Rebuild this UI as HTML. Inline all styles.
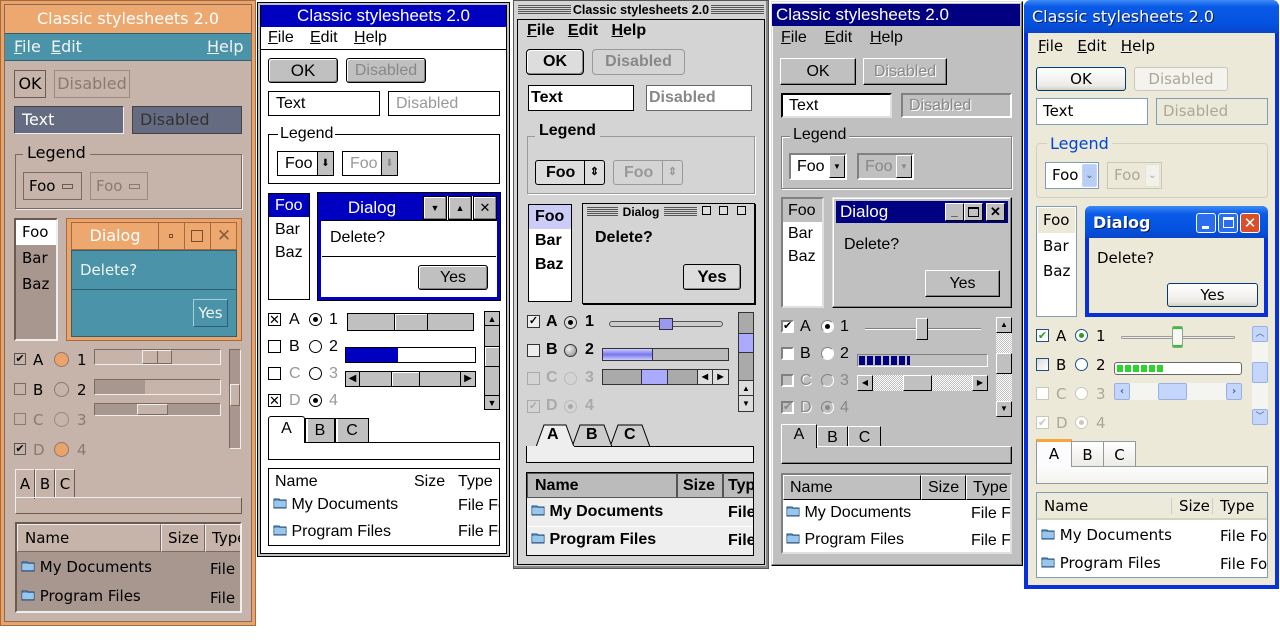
<!DOCTYPE html>
<html><head><meta charset="utf-8"><style>
*{margin:0;padding:0;box-sizing:border-box}
body{width:1280px;height:640px;background:#fff;position:relative;overflow:hidden;font-family:"DejaVu Sans","Liberation Sans",sans-serif;font-size:15px;color:#000}
.a{position:absolute;white-space:nowrap}
.c{text-align:center}
u{text-decoration:underline}
</style></head><body>
<svg width="0" height="0" style="position:absolute"><defs>
<symbol id="fold" viewBox="0 0 14 14"><path d="M1 3h5l1 1h6v8H1z" fill="#5aa0d8" stroke="#2a4a70"/><path d="M1 6h12M1 8h12M1 10h12" stroke="#d8ecff"/></symbol>
</defs></svg>

<!-- ================= PANEL 1 ================= -->
<div class="a" style="left:0;top:0;width:256px;height:626px;background:#e9a46c;border:1px solid #a86a3c"></div>
<div class="a" style="left:4px;top:4px;width:248px;height:618px;background:#c6b3a9;border:1px solid #8a6a58"></div>
<div class="a c" style="left:5px;top:5px;width:246px;height:28px;background:#eda870;color:#fff;font-size:16px;line-height:28px">Classic stylesheets 2.0</div>
<div class="a" style="left:5px;top:33px;width:246px;height:28px;background:#4a93a8;border-top:1px solid #2e6070;border-bottom:1px solid #2e6070;color:#f4f4f4;font-size:16px;line-height:26px"><span style="position:absolute;left:9px"><u>F</u>ile&nbsp; <u>E</u>dit</span><span style="position:absolute;left:202px"><u>H</u>elp</span></div>
<div class="a c" style="left:14px;top:70px;width:32px;height:28px;border:1px solid #6b5a50;line-height:26px;font-size:16px">OK</div>
<div class="a c" style="left:54px;top:70px;width:76px;height:28px;border:1px solid #9a8a80;line-height:26px;color:#8a7a72;font-size:16px">Disabled</div>
<div class="a" style="left:14px;top:106px;width:110px;height:28px;background:#656b80;border:1px solid #444;border-right-color:#eee;border-bottom-color:#eee;color:#fff;line-height:26px;padding-left:7px;font-size:16px">Text</div>
<div class="a" style="left:132px;top:106px;width:110px;height:28px;background:#656b80;border:1px solid #444;color:#333;line-height:26px;padding-left:7px;font-size:16px">Disabled</div>
<div class="a" style="left:15px;top:154px;width:227px;height:55px;border:1px solid #7a6a60;box-shadow:1px 1px 0 #eee"></div>
<div class="a" style="left:23px;top:143px;background:#c6b3a9;padding:0 4px;font-size:16px;line-height:20px">Legend</div>
<div class="a" style="left:23px;top:172px;width:59px;height:28px;border:1px solid #7a6a60;line-height:26px;padding-left:5px">Foo <span style="display:inline-block;width:11px;height:5px;border:1px solid #6b5a50;vertical-align:middle;margin-left:2px"></span></div>
<div class="a" style="left:90px;top:172px;width:58px;height:28px;border:1px solid #9a8a80;line-height:26px;padding-left:5px;color:#8a7a72">Foo <span style="display:inline-block;width:11px;height:5px;border:1px solid #8a7a72;vertical-align:middle;margin-left:2px"></span></div>
<div class="a" style="left:14px;top:218px;width:44px;height:123px;background:#a8978f;border:2px solid #6b5a50;border-right-color:#eee;border-bottom-color:#eee"></div>
<div class="a" style="left:16px;top:220px;width:40px;height:25px;background:#fff;line-height:25px;padding-left:6px;font-size:15px">Foo</div>
<div class="a" style="left:22px;top:248px;font-size:15px;line-height:20px">Bar<br><span style="line-height:32px">Baz</span></div>
<div class="a" style="left:66px;top:218px;width:176px;height:123px;background:#e9a46c;border:1px solid #a86a3c"></div>
<div class="a" style="left:71px;top:222px;width:166px;height:28px;background:#eda870;border:1px solid #a86a3c"></div>
<div class="a c" style="left:72px;top:223px;width:86px;height:26px;color:#fff;line-height:26px;font-size:16px">Dialog</div>
<div class="a" style="left:158px;top:223px;width:1px;height:26px;background:#a86a3c"></div>
<div class="a" style="left:184px;top:223px;width:1px;height:26px;background:#a86a3c"></div>
<div class="a" style="left:210px;top:223px;width:1px;height:26px;background:#a86a3c"></div>
<div class="a" style="left:169px;top:234px;width:4px;height:4px;border:1px solid #7a4a2a"></div>
<div class="a" style="left:191px;top:230px;width:12px;height:12px;border:1px solid #7a4a2a"></div>
<div class="a c" style="left:211px;top:223px;width:26px;height:26px;line-height:26px;color:#8a5a3a;font-size:17px">✕</div>
<div class="a" style="left:71px;top:250px;width:166px;height:87px;background:#4a93a8;border:1px solid #2e6070"></div>
<div class="a" style="left:80px;top:260px;color:#f4f4f4;font-size:15px;line-height:20px">Delete?</div>
<div class="a" style="left:72px;top:289px;width:164px;height:1px;background:#2e6070"></div>
<div class="a c" style="left:193px;top:299px;width:35px;height:28px;border:1px solid #2e6070;border-left-color:#a0d0dc;border-top-color:#a0d0dc;color:#f4f4f4;line-height:26px">Yes</div>
<div class="a" style="left:14px;top:353px;width:12px;height:12px;border:1px solid #555;font-size:11px;line-height:10px;text-align:center">✔</div>
<div class="a" style="left:14px;top:383px;width:12px;height:12px;border:1px solid #7a6a60"></div>
<div class="a" style="left:14px;top:413px;width:12px;height:12px;border:1px solid #8a7a72"></div>
<div class="a" style="left:14px;top:443px;width:12px;height:12px;border:1px solid #555;font-size:11px;line-height:10px;text-align:center">✔</div>
<div class="a" style="left:33px;top:350px;line-height:20px">A</div>
<div class="a" style="left:33px;top:380px;line-height:20px">B</div>
<div class="a" style="left:33px;top:410px;line-height:20px;color:#8a7a72">C</div>
<div class="a" style="left:33px;top:440px;line-height:20px;color:#8a7a72">D</div>
<div class="a" style="left:54px;top:352px;width:15px;height:15px;border-radius:50%;background:#eba36a;border:1px solid #8a7a72"></div>
<div class="a" style="left:54px;top:382px;width:15px;height:15px;border-radius:50%;border:1px solid #8a7a72"></div>
<div class="a" style="left:54px;top:412px;width:15px;height:15px;border-radius:50%;border:1px solid #9a8a80"></div>
<div class="a" style="left:54px;top:442px;width:15px;height:15px;border-radius:50%;background:#eba36a;border:1px solid #8a7a72"></div>
<div class="a" style="left:77px;top:350px;line-height:20px">1</div>
<div class="a" style="left:77px;top:380px;line-height:20px">2</div>
<div class="a" style="left:77px;top:410px;line-height:20px;color:#8a7a72">3</div>
<div class="a" style="left:77px;top:440px;line-height:20px;color:#8a7a72">4</div>
<div class="a" style="left:94px;top:349px;width:127px;height:16px;border:1px solid #7a6a60;border-right-color:#eee;border-bottom-color:#eee"></div>
<div class="a" style="left:142px;top:350px;width:30px;height:14px;border:1px solid #7a6a60;border-left-color:#eee;border-top-color:#eee;background:#c6b3a9"><div style="position:absolute;left:14px;top:0;width:1px;height:12px;background:#7a6a60"></div></div>
<div class="a" style="left:94px;top:379px;width:127px;height:16px;border:1px solid #7a6a60;border-right-color:#eee;border-bottom-color:#eee"></div>
<div class="a" style="left:95px;top:380px;width:50px;height:14px;background:#a8978f"></div>
<div class="a" style="left:94px;top:403px;width:127px;height:13px;background:#a8978f;border:1px solid #7a6a60;border-right-color:#eee;border-bottom-color:#eee"></div>
<div class="a" style="left:137px;top:404px;width:31px;height:11px;background:#c6b3a9;border:1px solid #eee;border-right-color:#7a6a60;border-bottom-color:#7a6a60"></div>
<div class="a" style="left:229px;top:349px;width:12px;height:100px;background:#a8978f;border:1px solid #7a6a60;border-right-color:#eee;border-bottom-color:#eee"></div>
<div class="a" style="left:230px;top:384px;width:10px;height:22px;background:#c6b3a9;border:1px solid #eee;border-right-color:#7a6a60;border-bottom-color:#7a6a60"></div>
<div class="a c" style="left:15px;top:469px;width:20px;height:30px;border:1px solid #eee;border-right-color:#6b5a50;border-bottom:none;line-height:28px">A</div>
<div class="a c" style="left:35px;top:469px;width:20px;height:28px;border:1px solid #eee;border-right-color:#6b5a50;border-bottom:none;line-height:28px">B</div>
<div class="a c" style="left:55px;top:469px;width:20px;height:28px;border:1px solid #eee;border-right-color:#6b5a50;border-bottom:none;line-height:28px">C</div>
<div class="a" style="left:15px;top:497px;width:227px;height:17px;border:1px solid #6b5a50;border-left-color:#eee;border-top:1px solid #eee"></div>
<div class="a" style="left:15px;top:522px;width:227px;height:91px;background:#a8978f;border:2px solid #6b5a50;border-right-color:#eee;border-bottom-color:#eee;overflow:hidden">
 <div class="a" style="left:0;top:0;width:144px;height:28px;background:#c6b3a9;border:1px solid #eee;border-right-color:#7a6a60;border-bottom-color:#7a6a60;line-height:26px;padding-left:7px">Name</div>
 <div class="a" style="left:144px;top:0;width:44px;height:28px;background:#c6b3a9;border:1px solid #eee;border-right-color:#7a6a60;border-bottom-color:#7a6a60;line-height:26px;padding-left:6px">Size</div>
 <div class="a" style="left:188px;top:0;width:50px;height:28px;background:#c6b3a9;border:1px solid #eee;border-bottom-color:#7a6a60;line-height:26px;padding-left:6px">Type</div>
 <div class="a" style="left:4px;top:33px;line-height:20px"><svg width="14" height="14" style="vertical-align:-1px"><use href="#fold"/></svg> My Documents</div>
 <div class="a" style="left:193px;top:35px;line-height:20px">File</div>
 <div class="a" style="left:4px;top:62px;line-height:20px"><svg width="14" height="14" style="vertical-align:-1px"><use href="#fold"/></svg> Program Files</div>
 <div class="a" style="left:193px;top:64px;line-height:20px">File</div>
</div>

<!-- ================= PANEL 2 ================= -->
<div style="font-family:'Liberation Sans',sans-serif;font-size:16px">
<div class="a" style="left:257px;top:2px;width:253px;height:555px;background:#c0c0c0;border:1px solid #000"></div>
<div class="a" style="left:260px;top:5px;width:247px;height:549px;background:#fff;border:1px solid #000"></div>
<div class="a c" style="left:261px;top:5px;width:245px;height:22px;background:#0000c0;color:#fff;line-height:22px;font-size:17px">Classic stylesheets 2.0</div>
<div class="a" style="left:261px;top:27px;width:245px;height:23px;border-bottom:1px solid #000;line-height:22px"><span class="a" style="left:7px"><u>F</u>ile</span><span class="a" style="left:49px"><u>E</u>dit</span><span class="a" style="left:93px"><u>H</u>elp</span></div>
<div class="a c" style="left:268px;top:58px;width:70px;height:25px;background:#c0c0c0;border:1px solid #000;border-radius:3px;box-shadow:inset -1px -1px 0 #808080,inset 1px 1px 0 #fff;line-height:23px;font-size:17px">OK</div>
<div class="a c" style="left:346px;top:58px;width:80px;height:25px;background:#c0c0c0;border:1px solid #000;border-radius:3px;box-shadow:inset -1px -1px 0 #808080,inset 1px 1px 0 #fff;line-height:23px;color:#888">Disabled</div>
<div class="a" style="left:268px;top:91px;width:112px;height:25px;border:1px solid #000;line-height:23px;padding-left:7px">Text</div>
<div class="a" style="left:388px;top:91px;width:112px;height:25px;border:1px solid #000;line-height:23px;padding-left:7px;color:#999">Disabled</div>
<div class="a" style="left:268px;top:134px;width:232px;height:50px;border:1px solid #000"></div>
<div class="a" style="left:278px;top:124px;background:#fff;padding:0 2px;line-height:20px">Legend</div>
<div class="a" style="left:277px;top:151px;width:57px;height:25px;border:1px solid #000;line-height:23px;padding-left:7px">Foo<div class="a c" style="right:0;top:0;width:16px;height:23px;background:#c0c0c0;border-left:1px solid #000;font-size:10px;line-height:23px">⬇</div></div>
<div class="a" style="left:342px;top:151px;width:56px;height:25px;border:1px solid #000;line-height:23px;padding-left:7px;color:#999">Foo<div class="a c" style="right:0;top:0;width:16px;height:23px;background:#c0c0c0;border-left:1px solid #000;font-size:10px;line-height:23px;color:#888">⬇</div></div>
<div class="a" style="left:268px;top:193px;width:42px;height:107px;border:1px solid #000"></div>
<div class="a" style="left:269px;top:194px;width:40px;height:23px;background:#0000c0;color:#fff;line-height:23px;padding-left:6px">Foo</div>
<div class="a" style="left:275px;top:218px;line-height:23px">Bar<br>Baz</div>
<div class="a" style="left:318px;top:193px;width:182px;height:107px;border:3px solid #0000c0;outline:1px solid #000"></div>
<div class="a c" style="left:321px;top:196px;width:102px;height:24px;background:#0000c0;color:#fff;line-height:24px;font-size:17px">Dialog</div>
<div class="a c" style="left:423px;top:196px;width:24px;height:24px;background:#c0c0c0;border:1px solid #000;box-shadow:inset -1px -1px 0 #808080,inset 1px 1px 0 #fff;font-size:9px;line-height:22px">▼</div>
<div class="a c" style="left:448px;top:196px;width:24px;height:24px;background:#c0c0c0;border:1px solid #000;box-shadow:inset -1px -1px 0 #808080,inset 1px 1px 0 #fff;font-size:9px;line-height:22px">▲</div>
<div class="a c" style="left:473px;top:196px;width:24px;height:24px;background:#c0c0c0;border:1px solid #000;box-shadow:inset -1px -1px 0 #808080,inset 1px 1px 0 #fff;font-size:13px;line-height:22px">✕</div>
<div class="a" style="left:321px;top:220px;width:176px;height:1px;background:#000"></div>
<div class="a" style="left:330px;top:228px;line-height:20px">Delete?</div>
<div class="a" style="left:322px;top:256px;width:174px;height:1px;background:#000"></div>
<div class="a c" style="left:418px;top:265px;width:70px;height:25px;background:#c0c0c0;border:1px solid #000;border-radius:3px;box-shadow:inset -1px -1px 0 #808080,inset 1px 1px 0 #fff;line-height:23px">Yes</div>
<div class="a c" style="left:268px;top:313px;width:13px;height:13px;border:1px solid #000;font-size:13px;line-height:11px">✕</div>
<div class="a" style="left:268px;top:340px;width:13px;height:13px;border:1px solid #000"></div>
<div class="a" style="left:268px;top:367px;width:13px;height:13px;border:1px solid #000"></div>
<div class="a c" style="left:268px;top:394px;width:13px;height:13px;border:1px solid #000;font-size:13px;line-height:11px">✕</div>
<div class="a" style="left:289px;top:310px;line-height:20px">A</div>
<div class="a" style="left:289px;top:337px;line-height:20px">B</div>
<div class="a" style="left:289px;top:364px;line-height:20px;color:#999">C</div>
<div class="a" style="left:289px;top:391px;line-height:20px;color:#999">D</div>
<div class="a" style="left:309px;top:313px;width:13px;height:13px;border:1px solid #000;border-radius:50%"><div style="position:absolute;left:3px;top:3px;width:5px;height:5px;border-radius:50%;background:#000"></div></div>
<div class="a" style="left:309px;top:340px;width:13px;height:13px;border:1px solid #000;border-radius:50%"></div>
<div class="a" style="left:309px;top:367px;width:13px;height:13px;border:1px solid #000;border-radius:50%"></div>
<div class="a" style="left:309px;top:394px;width:13px;height:13px;border:1px solid #000;border-radius:50%"><div style="position:absolute;left:3px;top:3px;width:5px;height:5px;border-radius:50%;background:#000"></div></div>
<div class="a" style="left:329px;top:310px;line-height:20px">1</div>
<div class="a" style="left:329px;top:337px;line-height:20px">2</div>
<div class="a" style="left:329px;top:364px;line-height:20px;color:#999">3</div>
<div class="a" style="left:329px;top:391px;line-height:20px;color:#999">4</div>
<div class="a" style="left:347px;top:313px;width:127px;height:18px;background:#c0c0c0;border:1px solid #000"></div>
<div class="a" style="left:394px;top:313px;width:34px;height:18px;background:#c0c0c0;border:1px solid #000;box-shadow:inset 1px 1px 0 #fff"></div>
<div class="a" style="left:345px;top:347px;width:131px;height:16px;border:1px solid #000"></div>
<div class="a" style="left:346px;top:348px;width:52px;height:14px;background:#0000c0"></div>
<div class="a" style="left:345px;top:371px;width:131px;height:16px;background:#c0c0c0;border:1px solid #000"></div>
<div class="a c" style="left:346px;top:372px;width:14px;height:14px;background:#c0c0c0;border-right:1px solid #000;font-size:10px;line-height:14px">◀</div>
<div class="a c" style="left:460px;top:372px;width:15px;height:14px;background:#c0c0c0;border-left:1px solid #000;font-size:10px;line-height:14px">▶</div>
<div class="a" style="left:391px;top:371px;width:29px;height:16px;background:#c0c0c0;border:1px solid #000;box-shadow:inset 1px 1px 0 #fff"></div>
<div class="a" style="left:484px;top:311px;width:16px;height:99px;background:#c0c0c0;border:1px solid #000"></div>
<div class="a c" style="left:485px;top:312px;width:14px;height:14px;border-bottom:1px solid #000;font-size:9px;line-height:14px">▲</div>
<div class="a c" style="left:485px;top:395px;width:14px;height:14px;border-top:1px solid #000;font-size:9px;line-height:14px">▼</div>
<div class="a" style="left:484px;top:346px;width:16px;height:21px;border:1px solid #000;box-shadow:inset 1px 1px 0 #fff"></div>
<div class="a c" style="left:268px;top:416px;width:37px;height:27px;background:#fff;border:1px solid #000;border-bottom:none;border-radius:3px 3px 0 0;line-height:24px">A</div>
<div class="a c" style="left:305px;top:418px;width:30px;height:25px;background:#c0c0c0;border:1px solid #000;box-shadow:inset 2px 0 0 #fff;line-height:24px">B</div>
<div class="a c" style="left:335px;top:418px;width:34px;height:25px;background:#c0c0c0;border:1px solid #000;box-shadow:inset 2px 0 0 #fff;line-height:24px">C</div>
<div class="a" style="left:268px;top:442px;width:232px;height:18px;border:1px solid #000;border-top:none"></div>
<div class="a" style="left:305px;top:442px;width:195px;height:1px;background:#000"></div>
<div class="a" style="left:268px;top:468px;width:232px;height:78px;border:1px solid #000;overflow:hidden">
 <div class="a" style="left:6px;top:3px;line-height:20px">Name</div>
 <div class="a" style="left:145px;top:3px;line-height:20px">Size</div>
 <div class="a" style="left:189px;top:3px;line-height:20px">Type</div>
 <div class="a" style="left:4px;top:26px;line-height:20px"><svg width="14" height="14" style="vertical-align:-1px"><use href="#fold"/></svg> My Documents</div>
 <div class="a" style="left:189px;top:27px;line-height:20px">File Fo</div>
 <div class="a" style="left:4px;top:53px;line-height:20px"><svg width="14" height="14" style="vertical-align:-1px"><use href="#fold"/></svg> Program Files</div>
 <div class="a" style="left:189px;top:53px;line-height:20px">File Fo</div>
</div>
</div>

<!-- ================= PANEL 3 ================= -->
<div style="font-family:'Liberation Sans',sans-serif;font-weight:bold;font-size:16px">
<div class="a" style="left:513px;top:0;width:256px;height:569px;background:#d4d4d4;border:1px solid #555;box-shadow:inset -2px -2px 0 #888"></div>
<div class="a" style="left:516px;top:2px;width:250px;height:16px;background:repeating-linear-gradient(#d4d4d4 0 1px,#555 1px 2px);background-clip:content-box;padding:3px 2px"></div>
<div class="a c" style="left:571px;top:2px;width:140px;height:16px;background:#d4d4d4;font-size:12.5px;line-height:16px">Classic stylesheets 2.0</div>
<div class="a" style="left:517px;top:19px;width:248px;height:546px;border:1px solid #000"></div>
<div class="a" style="left:527px;top:20px;line-height:22px"><u>F</u>ile&nbsp;&nbsp; <u>E</u>dit&nbsp;&nbsp; <u>H</u>elp</div>
<div class="a c" style="left:526px;top:49px;width:58px;height:26px;background:#ddd;border:1px solid #000;border-radius:4px;box-shadow:inset -1px -1px 0 #888,inset 1px 1px 0 #fff;line-height:24px">OK</div>
<div class="a c" style="left:592px;top:49px;width:93px;height:26px;border:1px solid #999;border-radius:4px;line-height:24px;color:#888">Disabled</div>
<div class="a" style="left:528px;top:85px;width:106px;height:26px;background:#fff;border:1px solid #000;line-height:24px;padding-left:2px">Text</div>
<div class="a" style="left:646px;top:85px;width:106px;height:26px;background:#fff;border:1px solid #666;line-height:24px;padding-left:2px;color:#888">Disabled</div>
<div class="a" style="left:527px;top:136px;width:228px;height:58px;border:1px solid #999;box-shadow:1px 1px 0 #fff"></div>
<div class="a" style="left:535px;top:121px;background:#d4d4d4;padding:0 4px;line-height:20px">Legend</div>
<div class="a" style="left:535px;top:160px;width:70px;height:25px;background:#ddd;border:1px solid #000;border-radius:3px;line-height:23px;padding-left:10px">Foo<div class="a c" style="right:0;top:0;width:20px;height:23px;border-left:1px solid #000;font-size:11px;line-height:23px">⇕</div></div>
<div class="a" style="left:613px;top:160px;width:70px;height:25px;border:1px solid #999;border-radius:3px;line-height:23px;padding-left:10px;color:#999">Foo<div class="a c" style="right:0;top:0;width:20px;height:23px;border-left:1px solid #999;font-size:11px;line-height:23px">⇕</div></div>
<div class="a" style="left:528px;top:204px;width:44px;height:98px;background:#fff;border:1px solid #000"></div>
<div class="a" style="left:529px;top:205px;width:42px;height:24px;background:#ccccf8;line-height:24px;padding-left:6px">Foo</div>
<div class="a" style="left:535px;top:229px;line-height:24px">Bar<br>Baz</div>
<div class="a" style="left:582px;top:203px;width:173px;height:101px;border:1px solid #000;box-shadow:1px 1px 0 #000"></div>
<div class="a" style="left:587px;top:207px;width:110px;height:10px;background:repeating-linear-gradient(#555 0 1px,#d4d4d4 1px 2px)"></div>
<div class="a c" style="left:618px;top:204px;width:46px;height:16px;background:#d4d4d4;font-size:12px;line-height:16px">Dialog</div>
<div class="a" style="left:702px;top:206px;width:9px;height:9px;border:1px solid #000;background:#ddd"></div>
<div class="a" style="left:719px;top:206px;width:9px;height:9px;border:1px solid #000;background:#ddd"></div>
<div class="a" style="left:737px;top:206px;width:9px;height:9px;border:1px solid #000;background:#ddd"></div>
<div class="a" style="left:595px;top:228px;line-height:20px">Delete?</div>
<div class="a c" style="left:683px;top:264px;width:58px;height:26px;background:#ddd;border:1px solid #000;border-radius:3px;box-shadow:inset -1px -1px 0 #888;line-height:24px;font-size:17px">Yes</div>
<div class="a c" style="left:527px;top:315px;width:13px;height:13px;background:#eee;border:1px solid #333;font-size:11px;line-height:11px">✓</div>
<div class="a" style="left:527px;top:344px;width:13px;height:13px;background:#eee;border:1px solid #333"></div>
<div class="a" style="left:527px;top:372px;width:13px;height:13px;border:1px solid #aaa"></div>
<div class="a c" style="left:527px;top:400px;width:13px;height:13px;border:1px solid #aaa;color:#aaa;font-size:11px;line-height:11px">✓</div>
<div class="a" style="left:546px;top:312px;line-height:20px">A</div>
<div class="a" style="left:546px;top:340px;line-height:20px">B</div>
<div class="a" style="left:546px;top:368px;line-height:20px;color:#aaa">C</div>
<div class="a" style="left:546px;top:396px;line-height:20px;color:#aaa">D</div>
<div class="a" style="left:564px;top:316px;width:13px;height:13px;border-radius:50%;border:1px solid #333;background:#ddd"><div style="position:absolute;left:3px;top:3px;width:5px;height:5px;border-radius:50%;background:#000"></div></div>
<div class="a" style="left:564px;top:344px;width:13px;height:13px;border-radius:50%;border:1px solid #333;background:radial-gradient(circle at 35% 35%,#eee,#888)"></div>
<div class="a" style="left:564px;top:372px;width:13px;height:13px;border-radius:50%;border:1px solid #bbb"></div>
<div class="a" style="left:564px;top:400px;width:13px;height:13px;border-radius:50%;border:1px solid #bbb"><div style="position:absolute;left:3px;top:3px;width:5px;height:5px;border-radius:50%;background:#aaa"></div></div>
<div class="a" style="left:585px;top:312px;line-height:20px">1</div>
<div class="a" style="left:585px;top:340px;line-height:20px">2</div>
<div class="a" style="left:585px;top:368px;line-height:20px;color:#aaa">3</div>
<div class="a" style="left:585px;top:396px;line-height:20px;color:#aaa">4</div>
<div class="a" style="left:609px;top:321px;width:114px;height:6px;border:1px solid #555;border-radius:3px;background:#ccc"></div>
<div class="a" style="left:659px;top:318px;width:14px;height:12px;border:1px solid #333;background:#9999f0"></div>
<div class="a" style="left:602px;top:348px;width:127px;height:13px;border:1px solid #333;background:#bbb"></div>
<div class="a" style="left:603px;top:349px;width:50px;height:11px;background:linear-gradient(#ccf,#77e,#ccf);border-right:1px solid #333"></div>
<div class="a" style="left:602px;top:369px;width:127px;height:16px;border:1px solid #333;background:#aaa"></div>
<div class="a" style="left:641px;top:370px;width:27px;height:14px;background:#aaf;border-left:1px solid #333;border-right:1px solid #333"></div>
<div class="a c" style="left:697px;top:370px;width:15px;height:14px;background:#ddd;border-left:1px solid #333;font-size:8px;line-height:14px">◀</div>
<div class="a c" style="left:712px;top:370px;width:16px;height:14px;background:#ddd;border-left:1px solid #333;font-size:8px;line-height:14px">▶</div>
<div class="a" style="left:738px;top:312px;width:16px;height:100px;border:1px solid #333;background:#aaa"></div>
<div class="a" style="left:739px;top:333px;width:14px;height:20px;background:#aaf;border-top:1px solid #333;border-bottom:1px solid #333"></div>
<div class="a c" style="left:739px;top:380px;width:14px;height:15px;background:#ddd;border-top:1px solid #333;font-size:8px;line-height:15px">▲</div>
<div class="a c" style="left:739px;top:395px;width:14px;height:16px;background:#ddd;border-top:1px solid #333;font-size:8px;line-height:16px">▼</div>
<svg class="a" style="left:526px;top:422px" width="140" height="26"><path d="M84 25 L92 3 H116 L124 25" fill="#ccc" stroke="#000"/><path d="M46 25 L54 3 H78 L86 25" fill="#ccc" stroke="#000"/><path d="M0 25 H10 L18 3 H40 L48 25" fill="#eee" stroke="#000"/></svg>
<div class="a" style="left:547px;top:425px;line-height:20px">A</div>
<div class="a" style="left:586px;top:425px;line-height:20px">B</div>
<div class="a" style="left:624px;top:425px;line-height:20px">C</div>
<div class="a" style="left:526px;top:446px;width:228px;height:17px;background:#eee;border:1px solid #000;border-top:none"></div>
<div class="a" style="left:574px;top:446px;width:180px;height:1px;background:#000"></div>
<div class="a" style="left:526px;top:472px;width:228px;height:84px;background:#eee;border:1px solid #000;overflow:hidden">
 <div class="a" style="left:0;top:0;width:150px;height:25px;background:#bbb;border:1px solid #555;line-height:23px;padding-left:7px">Name</div>
 <div class="a" style="left:150px;top:0;width:46px;height:25px;background:#bbb;border:1px solid #555;line-height:23px;padding-left:5px">Size</div>
 <div class="a" style="left:196px;top:0;width:40px;height:25px;background:#bbb;border:1px solid #555;line-height:23px;padding-left:4px">Type</div>
 <div class="a" style="left:0;top:53px;width:228px;height:1px;background:#fff"></div>
 <div class="a" style="left:4px;top:28px;line-height:22px"><svg width="14" height="14" style="vertical-align:-1px"><use href="#fold"/></svg> My Documents</div>
 <div class="a" style="left:201px;top:29px;line-height:22px">File</div>
 <div class="a" style="left:4px;top:56px;line-height:22px"><svg width="14" height="14" style="vertical-align:-1px"><use href="#fold"/></svg> Program Files</div>
 <div class="a" style="left:201px;top:57px;line-height:22px">File</div>
</div>
</div>

<!-- ================= PANEL 4 ================= -->
<div style="font-family:'Liberation Sans',sans-serif;font-size:16px">
<div class="a" style="left:771px;top:1px;width:252px;height:565px;background:#c0c0c0;border:1px solid #dfdfdf;border-right-color:#000;border-bottom-color:#000;box-shadow:inset -1px -1px 0 #808080,inset 1px 1px 0 #fff"></div>
<div class="a" style="left:772px;top:4px;width:248px;height:22px;background:#000080;color:#fff;line-height:22px;padding-left:4px;font-size:17px">Classic stylesheets 2.0</div>
<div class="a" style="left:781px;top:28px;line-height:20px"><u>F</u>ile&nbsp;&nbsp;&nbsp; <u>E</u>dit&nbsp;&nbsp;&nbsp; <u>H</u>elp</div>
<div class="a c" style="left:780px;top:58px;width:76px;height:27px;border:1px solid #fff;border-right-color:#000;border-bottom-color:#000;box-shadow:inset -1px -1px 0 #808080;line-height:25px">OK</div>
<div class="a c" style="left:863px;top:58px;width:84px;height:27px;border:1px solid #fff;border-right-color:#000;border-bottom-color:#000;box-shadow:inset -1px -1px 0 #808080;line-height:25px;color:#888;text-shadow:1px 1px 0 #fff">Disabled</div>
<div class="a" style="left:781px;top:93px;width:111px;height:25px;background:#fff;border:2px solid #000;border-right-color:#dfdfdf;border-bottom-color:#dfdfdf;line-height:21px;padding-left:6px">Text</div>
<div class="a" style="left:901px;top:93px;width:111px;height:25px;border:2px solid #808080;border-right-color:#fff;border-bottom-color:#fff;line-height:21px;padding-left:6px;color:#888;text-shadow:1px 1px 0 #fff">Disabled</div>
<div class="a" style="left:781px;top:136px;width:231px;height:53px;border:1px solid #808080;box-shadow:1px 1px 0 #fff,inset 1px 1px 0 #fff"></div>
<div class="a" style="left:790px;top:125px;background:#c0c0c0;padding:0 3px;line-height:20px">Legend</div>
<div class="a" style="left:789px;top:153px;width:58px;height:27px;background:#fff;border:2px solid #808080;border-right-color:#fff;border-bottom-color:#fff;line-height:23px;padding-left:6px">Foo<div class="a c" style="right:0;top:0;width:16px;height:23px;background:#c0c0c0;border:1px solid #fff;border-right-color:#000;border-bottom-color:#000;font-size:8px;line-height:21px">▼</div></div>
<div class="a" style="left:857px;top:153px;width:57px;height:27px;background:#c0c0c0;border:2px solid #808080;border-right-color:#fff;border-bottom-color:#fff;line-height:23px;padding-left:6px;color:#888">Foo<div class="a c" style="right:0;top:0;width:16px;height:23px;background:#c0c0c0;border:1px solid #fff;border-right-color:#000;border-bottom-color:#000;font-size:8px;line-height:21px;color:#888">▼</div></div>
<div class="a" style="left:781px;top:197px;width:43px;height:111px;background:#fff;border:2px solid #808080;border-right-color:#dfdfdf;border-bottom-color:#dfdfdf"></div>
<div class="a" style="left:783px;top:199px;width:39px;height:23px;background:#c0c0c0;line-height:23px;padding-left:5px">Foo</div>
<div class="a" style="left:788px;top:222px;line-height:23px">Bar<br>Baz</div>
<div class="a" style="left:832px;top:197px;width:180px;height:111px;border:1px solid #dfdfdf;border-right-color:#000;border-bottom-color:#000;box-shadow:inset -1px -1px 0 #808080,inset 1px 1px 0 #fff"></div>
<div class="a" style="left:836px;top:201px;width:172px;height:22px;background:#000080;color:#fff;line-height:22px;padding-left:4px;font-size:17px">Dialog</div>
<div class="a c" style="left:945px;top:203px;width:19px;height:18px;background:#c0c0c0;border:1px solid #fff;border-right-color:#000;border-bottom-color:#000;font-size:12px;line-height:14px;font-weight:bold">_</div>
<div class="a" style="left:964px;top:203px;width:19px;height:18px;background:#c0c0c0;border:1px solid #fff;border-right-color:#000;border-bottom-color:#000"><div style="position:absolute;left:3px;top:3px;width:11px;height:10px;border:1px solid #000;border-top-width:2px"></div></div>
<div class="a c" style="left:986px;top:203px;width:19px;height:18px;background:#c0c0c0;border:1px solid #fff;border-right-color:#000;border-bottom-color:#000;font-size:13px;line-height:16px;font-weight:bold">✕</div>
<div class="a" style="left:844px;top:235px;line-height:20px">Delete?</div>
<div class="a c" style="left:925px;top:270px;width:75px;height:27px;border:1px solid #fff;border-right-color:#000;border-bottom-color:#000;box-shadow:inset -1px -1px 0 #808080;line-height:25px">Yes</div>
<div class="a c" style="left:781px;top:320px;width:13px;height:13px;background:#fff;border:2px solid #808080;border-right-color:#fff;border-bottom-color:#fff;font-size:11px;line-height:9px">✔</div>
<div class="a" style="left:781px;top:347px;width:13px;height:13px;background:#fff;border:2px solid #808080;border-right-color:#fff;border-bottom-color:#fff"></div>
<div class="a" style="left:781px;top:374px;width:13px;height:13px;border:2px solid #808080;border-right-color:#fff;border-bottom-color:#fff"></div>
<div class="a c" style="left:781px;top:401px;width:13px;height:13px;border:2px solid #808080;border-right-color:#fff;border-bottom-color:#fff;color:#888;font-size:11px;line-height:9px">✔</div>
<div class="a" style="left:800px;top:317px;line-height:20px">A</div>
<div class="a" style="left:800px;top:344px;line-height:20px">B</div>
<div class="a" style="left:800px;top:371px;line-height:20px;color:#888;text-shadow:1px 1px 0 #fff">C</div>
<div class="a" style="left:800px;top:398px;line-height:20px;color:#888;text-shadow:1px 1px 0 #fff">D</div>
<div class="a" style="left:821px;top:320px;width:13px;height:13px;border-radius:50%;background:#fff;border:1px solid #808080;border-right-color:#fff;border-bottom-color:#fff"><div style="position:absolute;left:3px;top:3px;width:5px;height:5px;border-radius:50%;background:#000"></div></div>
<div class="a" style="left:821px;top:347px;width:13px;height:13px;border-radius:50%;background:#fff;border:1px solid #808080;border-right-color:#fff;border-bottom-color:#fff"></div>
<div class="a" style="left:821px;top:374px;width:13px;height:13px;border-radius:50%;border:1px solid #808080;border-right-color:#fff;border-bottom-color:#fff"></div>
<div class="a" style="left:821px;top:401px;width:13px;height:13px;border-radius:50%;border:1px solid #808080;border-right-color:#fff;border-bottom-color:#fff"><div style="position:absolute;left:3px;top:3px;width:5px;height:5px;border-radius:50%;background:#888"></div></div>
<div class="a" style="left:840px;top:317px;line-height:20px">1</div>
<div class="a" style="left:840px;top:344px;line-height:20px">2</div>
<div class="a" style="left:840px;top:371px;line-height:20px;color:#888">3</div>
<div class="a" style="left:840px;top:398px;line-height:20px;color:#888">4</div>
<div class="a" style="left:865px;top:328px;width:116px;height:2px;border-top:1px solid #808080;border-bottom:1px solid #fff"></div>
<div class="a" style="left:916px;top:318px;width:12px;height:22px;border:1px solid #fff;border-right-color:#000;border-bottom-color:#000;background:#c0c0c0"></div>
<div class="a" style="left:857px;top:354px;width:131px;height:13px;border:1px solid #808080;border-right-color:#fff;border-bottom-color:#fff;background:repeating-linear-gradient(90deg,#000080 0 6px,transparent 6px 8px) 1px 1px/51px 9px no-repeat"></div>
<div class="a" style="left:857px;top:375px;width:131px;height:16px;background:repeating-conic-gradient(#c0c0c0 0 25%,#fff 0 50%) 0 0/2px 2px"></div>
<div class="a c" style="left:857px;top:375px;width:16px;height:16px;background:#c0c0c0;border:1px solid #fff;border-right-color:#000;border-bottom-color:#000;font-size:8px;line-height:14px">◀</div>
<div class="a c" style="left:972px;top:375px;width:16px;height:16px;background:#c0c0c0;border:1px solid #fff;border-right-color:#000;border-bottom-color:#000;font-size:8px;line-height:14px">▶</div>
<div class="a" style="left:903px;top:375px;width:29px;height:16px;background:#c0c0c0;border:1px solid #fff;border-right-color:#000;border-bottom-color:#000"></div>
<div class="a" style="left:996px;top:317px;width:16px;height:100px;background:repeating-conic-gradient(#c0c0c0 0 25%,#fff 0 50%) 0 0/2px 2px"></div>
<div class="a c" style="left:996px;top:317px;width:16px;height:16px;background:#c0c0c0;border:1px solid #fff;border-right-color:#000;border-bottom-color:#000;font-size:8px;line-height:14px">▲</div>
<div class="a" style="left:996px;top:353px;width:16px;height:21px;background:#c0c0c0;border:1px solid #fff;border-right-color:#000;border-bottom-color:#000"></div>
<div class="a c" style="left:996px;top:401px;width:16px;height:16px;background:#c0c0c0;border:1px solid #fff;border-right-color:#000;border-bottom-color:#000;font-size:8px;line-height:14px">▼</div>
<div class="a c" style="left:781px;top:424px;width:36px;height:24px;border:1px solid #fff;border-right:1px solid #000;border-bottom:none;line-height:20px;background:#c0c0c0;z-index:2">A</div>
<div class="a c" style="left:817px;top:426px;width:31px;height:21px;border:1px solid #fff;border-right:1px solid #000;border-bottom:none;line-height:21px">B</div>
<div class="a c" style="left:848px;top:426px;width:33px;height:21px;border:1px solid #fff;border-right:1px solid #000;border-bottom:none;line-height:21px">C</div>
<div class="a" style="left:781px;top:446px;width:231px;height:18px;border:1px solid #fff;border-right-color:#000;border-bottom-color:#000;box-shadow:inset -1px -1px 0 #808080"></div>
<div class="a" style="left:781px;top:473px;width:231px;height:81px;background:#fff;border:2px solid #808080;border-right-color:#dfdfdf;border-bottom-color:#dfdfdf;overflow:hidden">
 <div class="a" style="left:0;top:0;width:138px;height:25px;background:#c0c0c0;border:1px solid #fff;border-right-color:#000;border-bottom-color:#000;line-height:23px;padding-left:6px">Name</div>
 <div class="a" style="left:138px;top:0;width:45px;height:25px;background:#c0c0c0;border:1px solid #fff;border-right-color:#000;border-bottom-color:#000;line-height:23px;padding-left:6px">Size</div>
 <div class="a" style="left:183px;top:0;width:50px;height:25px;background:#c0c0c0;border:1px solid #fff;border-bottom-color:#000;line-height:23px;padding-left:6px">Type</div>
 <div class="a" style="left:3px;top:27px;line-height:22px"><svg width="14" height="14" style="vertical-align:-1px"><use href="#fold"/></svg> My Documents</div>
 <div class="a" style="left:188px;top:28px;line-height:22px">File F</div>
 <div class="a" style="left:3px;top:54px;line-height:22px"><svg width="14" height="14" style="vertical-align:-1px"><use href="#fold"/></svg> Program Files</div>
 <div class="a" style="left:188px;top:55px;line-height:22px">File F</div>
</div>
</div>

<!-- ================= PANEL 5 ================= -->
<div style="font-family:'DejaVu Sans',sans-serif;font-size:15px">
<div class="a" style="left:1024px;top:0;width:255px;height:589px;background:#0831d9;border-radius:7px 7px 0 0"></div>
<div class="a" style="left:1024px;top:0;width:255px;height:33px;background:linear-gradient(#3d8bf5,#0a5ae8 20%,#0453e0 70%,#0846c8);border-radius:7px 7px 0 0;color:#fff;line-height:34px;padding-left:8px;font-size:16px;text-shadow:1px 1px 0 #0a1a60">Classic stylesheets 2.0</div>
<div class="a" style="left:1028px;top:33px;width:247px;height:552px;background:#ece9d8"></div>
<div class="a" style="left:1038px;top:36px;line-height:20px"><u>F</u>ile&nbsp;&nbsp; <u>E</u>dit&nbsp;&nbsp; <u>H</u>elp</div>
<div class="a c" style="left:1036px;top:67px;width:90px;height:24px;background:linear-gradient(#fff,#ecebe6 80%,#d6d0c5);border:1px solid #003c74;border-radius:3px;line-height:22px">OK</div>
<div class="a c" style="left:1134px;top:67px;width:94px;height:24px;background:#f4f3ee;border:1px solid #c9c7ba;border-radius:3px;line-height:22px;color:#aca899">Disabled</div>
<div class="a" style="left:1036px;top:98px;width:112px;height:27px;background:#fff;border:1px solid #7f9db9;line-height:25px;padding-left:6px">Text</div>
<div class="a" style="left:1156px;top:98px;width:112px;height:27px;border:1px solid #7f9db9;line-height:25px;padding-left:6px;color:#aca899">Disabled</div>
<div class="a" style="left:1036px;top:143px;width:232px;height:55px;border:1px solid #d0d0bf;border-radius:4px"></div>
<div class="a" style="left:1047px;top:134px;background:#ece9d8;padding:0 3px;line-height:20px;color:#0046d5;font-size:16px">Legend</div>
<div class="a" style="left:1045px;top:162px;width:54px;height:27px;background:#fff;border:1px solid #7f9db9;line-height:25px;padding-left:6px">Foo<div class="a c" style="right:1px;top:1px;width:15px;height:23px;background:#b9cdf5;border:1px solid #c3d3fd;border-radius:2px;font-size:10px;line-height:21px;color:#4d6185">⌄</div></div>
<div class="a" style="left:1107px;top:162px;width:55px;height:27px;border:1px solid #c9c7ba;line-height:25px;padding-left:6px;color:#aca899">Foo<div class="a c" style="right:1px;top:1px;width:15px;height:23px;background:#f2f1ea;border:1px solid #e5e2d8;font-size:10px;line-height:21px">⌄</div></div>
<div class="a" style="left:1036px;top:206px;width:41px;height:111px;background:#fff;border:1px solid #7f9db9"></div>
<div class="a" style="left:1038px;top:208px;width:37px;height:25px;background:#ece9d8;line-height:25px;padding-left:5px">Foo</div>
<div class="a" style="left:1043px;top:234px;line-height:25px">Bar<br>Baz</div>
<div class="a" style="left:1085px;top:206px;width:183px;height:111px;background:#0831d9;border-radius:6px 6px 0 0"></div>
<div class="a" style="left:1085px;top:206px;width:183px;height:32px;background:linear-gradient(#3d8bf5,#0a5ae8 25%,#0453e0 70%,#0846c8);border-radius:6px 6px 0 0;color:#fff;line-height:34px;padding-left:8px;font-size:16px;font-weight:bold;text-shadow:1px 1px 0 #0a1a60">Dialog</div>
<div class="a" style="left:1196px;top:213px;width:20px;height:20px;background:#2a6ef0;border:1px solid #fff;border-radius:3px"><div style="position:absolute;left:5px;top:12px;width:7px;height:3px;background:#fff"></div></div>
<div class="a" style="left:1218px;top:213px;width:20px;height:20px;background:#2a6ef0;border:1px solid #fff;border-radius:3px"><div style="position:absolute;left:4px;top:3px;width:11px;height:11px;border:1px solid #fff;border-top-width:3px"></div></div>
<div class="a c" style="left:1240px;top:213px;width:20px;height:20px;background:#d8502a;border:1px solid #fff;border-radius:3px;color:#fff;font-size:15px;line-height:18px;font-weight:bold">✕</div>
<div class="a" style="left:1089px;top:238px;width:175px;height:75px;background:#ece9d8"></div>
<div class="a" style="left:1097px;top:248px;line-height:20px">Delete?</div>
<div class="a c" style="left:1167px;top:283px;width:91px;height:24px;background:linear-gradient(#fff,#ecebe6 80%,#d6d0c5);border:1px solid #003c74;border-radius:3px;line-height:22px">Yes</div>
<div class="a c" style="left:1036px;top:329px;width:13px;height:13px;background:#fff;border:1px solid #1c5180;color:#21a121;font-size:11px;line-height:11px">✔</div>
<div class="a" style="left:1036px;top:358px;width:13px;height:13px;background:linear-gradient(135deg,#dcdcd7,#fff);border:1px solid #1c5180"></div>
<div class="a" style="left:1036px;top:387px;width:13px;height:13px;background:#fff;border:1px solid #cac8bb"></div>
<div class="a c" style="left:1036px;top:416px;width:13px;height:13px;background:#fff;border:1px solid #cac8bb;color:#cac8bb;font-size:11px;line-height:11px">✔</div>
<div class="a" style="left:1056px;top:326px;line-height:20px">A</div>
<div class="a" style="left:1056px;top:355px;line-height:20px">B</div>
<div class="a" style="left:1056px;top:384px;line-height:20px;color:#aca899">C</div>
<div class="a" style="left:1056px;top:413px;line-height:20px;color:#aca899">D</div>
<div class="a" style="left:1075px;top:329px;width:13px;height:13px;border-radius:50%;background:#fff;border:1px solid #1c5180"><div style="position:absolute;left:3px;top:3px;width:5px;height:5px;border-radius:50%;background:#21a121"></div></div>
<div class="a" style="left:1075px;top:358px;width:13px;height:13px;border-radius:50%;background:#fff;border:1px solid #1c5180"></div>
<div class="a" style="left:1075px;top:387px;width:13px;height:13px;border-radius:50%;background:#fff;border:1px solid #cac8bb"></div>
<div class="a" style="left:1075px;top:416px;width:13px;height:13px;border-radius:50%;background:#fff;border:1px solid #cac8bb"><div style="position:absolute;left:3px;top:3px;width:5px;height:5px;border-radius:50%;background:#cac8bb"></div></div>
<div class="a" style="left:1096px;top:326px;line-height:20px">1</div>
<div class="a" style="left:1096px;top:355px;line-height:20px">2</div>
<div class="a" style="left:1096px;top:384px;line-height:20px;color:#aca899">3</div>
<div class="a" style="left:1096px;top:413px;line-height:20px;color:#aca899">4</div>
<div class="a" style="left:1121px;top:336px;width:114px;height:3px;background:#ecebe6;border:1px solid #9d9c99;border-radius:2px"></div>
<div class="a" style="left:1172px;top:326px;width:11px;height:22px;background:#f7f7f4;border:1px solid #8a8;border-radius:2px;box-shadow:inset 0 2px 0 #2fc52f,inset 0 -2px 0 #2fc52f"></div>
<div class="a" style="left:1114px;top:362px;width:128px;height:13px;background:#fff;border:1px solid #686868;border-radius:3px"></div>
<div class="a" style="left:1117px;top:365px;width:46px;height:7px;background:repeating-linear-gradient(90deg,#2fd22f 0 6px,transparent 6px 8px)"></div>
<div class="a" style="left:1114px;top:383px;width:128px;height:17px;background:#f4f4f0"></div>
<div class="a c" style="left:1114px;top:383px;width:16px;height:17px;background:#c4d6fc;border:1px solid #98b0e8;border-radius:2px;color:#4d6185;font-size:10px;line-height:15px;font-weight:bold">‹</div>
<div class="a c" style="left:1226px;top:383px;width:16px;height:17px;background:#c4d6fc;border:1px solid #98b0e8;border-radius:2px;color:#4d6185;font-size:10px;line-height:15px;font-weight:bold">›</div>
<div class="a" style="left:1158px;top:383px;width:29px;height:17px;background:#c4d6fc;border:1px solid #98b0e8;border-radius:2px"></div>
<div class="a" style="left:1252px;top:326px;width:16px;height:99px;background:#f4f4f0"></div>
<div class="a c" style="left:1252px;top:326px;width:16px;height:16px;background:#c4d6fc;border:1px solid #98b0e8;border-radius:2px;color:#4d6185;font-size:9px;line-height:14px">︿</div>
<div class="a" style="left:1252px;top:362px;width:16px;height:21px;background:#c4d6fc;border:1px solid #98b0e8;border-radius:2px"></div>
<div class="a c" style="left:1252px;top:409px;width:16px;height:16px;background:#c4d6fc;border:1px solid #98b0e8;border-radius:2px;color:#4d6185;font-size:9px;line-height:14px">﹀</div>
<div class="a c" style="left:1036px;top:439px;width:36px;height:28px;background:#fcfcfe;border:1px solid #919b9c;border-top:3px solid #f8a53a;border-bottom:none;line-height:24px;z-index:2">A</div>
<div class="a c" style="left:1071px;top:441px;width:33px;height:26px;background:linear-gradient(#fff,#ecebe6);border:1px solid #919b9c;line-height:26px">B</div>
<div class="a c" style="left:1103px;top:441px;width:33px;height:26px;background:linear-gradient(#fff,#ecebe6);border:1px solid #919b9c;line-height:26px">C</div>
<div class="a" style="left:1036px;top:466px;width:232px;height:18px;background:linear-gradient(#fcfcfe,#f4f3ee);border:1px solid #919b9c"></div>
<div class="a" style="left:1036px;top:492px;width:232px;height:86px;background:#fff;border:1px solid #7f9db9;overflow:hidden">
 <div class="a" style="left:0;top:0;width:232px;height:27px;background:#ebeadb;border-bottom:2px solid #d6d2c2"></div>
 <div class="a" style="left:7px;top:3px;line-height:20px">Name</div>
 <div class="a" style="left:134px;top:5px;width:1px;height:16px;background:#ccc"></div>
 <div class="a" style="left:142px;top:3px;line-height:20px">Size</div>
 <div class="a" style="left:175px;top:5px;width:1px;height:16px;background:#ccc"></div>
 <div class="a" style="left:183px;top:3px;line-height:20px">Type</div>
 <div class="a" style="left:4px;top:31px;line-height:22px"><svg width="14" height="14" style="vertical-align:-1px"><use href="#fold"/></svg> My Documents</div>
 <div class="a" style="left:183px;top:32px;line-height:22px">File Fol</div>
 <div class="a" style="left:4px;top:59px;line-height:22px"><svg width="14" height="14" style="vertical-align:-1px"><use href="#fold"/></svg> Program Files</div>
 <div class="a" style="left:183px;top:60px;line-height:22px">File Fol</div>
</div>
</div>
</body></html>
